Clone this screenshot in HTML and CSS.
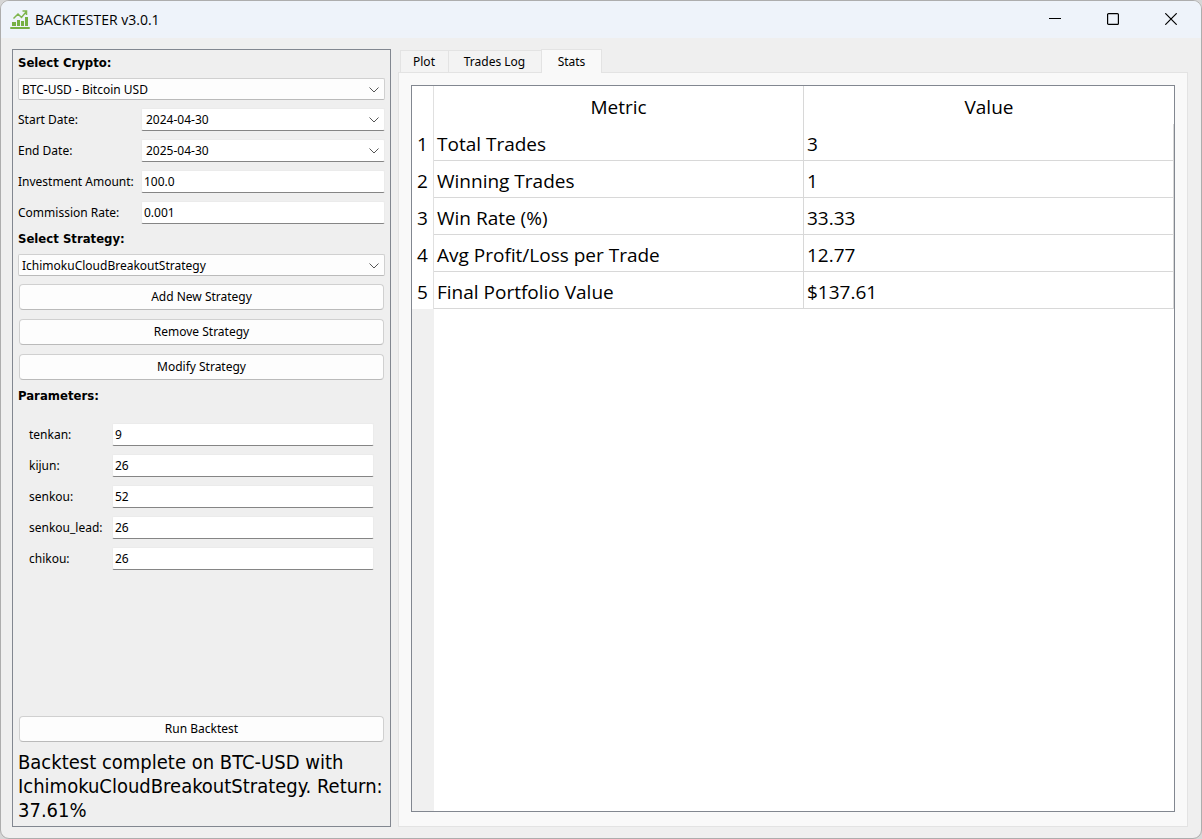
FILE: index.html
```html
<!DOCTYPE html>
<html lang="en">
<head>
<meta charset="utf-8">
<title>BACKTESTER v3.0.1</title>
<link rel="stylesheet" href="styles.css">
</head>
<body>
<div class="window">
  <header class="titlebar">
    <svg class="app-icon" width="20" height="20" viewBox="0 0 20 20" aria-hidden="true">
      <g fill="#76b043">
        <rect x="2" y="12" width="4" height="4"/>
        <rect x="7" y="10" width="3" height="6"/>
        <rect x="11" y="11" width="3" height="5"/>
        <rect x="15" y="7" width="3" height="9"/>
        <rect x="0" y="17" width="20" height="2" rx="1"/>
      </g>
      <path d="M3.500 8.500 8 4l3.500 3.500L16 2M12.500 1h4v4" fill="none" stroke="#7fb54e" stroke-width="1.500"/>
    </svg>
    <h1 class="title">BACKTESTER v3.0.1</h1>
    <div class="window-controls">
      <button class="window-button" type="button" aria-label="Minimize"><svg width="12" height="12" viewBox="0 0 12 12"><path d="M0 5.500h12"/></svg></button>
      <button class="window-button" type="button" aria-label="Maximize"><svg width="12" height="12" viewBox="0 0 12 12"><rect x=".6" y=".6" width="10.800" height="10.800" rx="1"/></svg></button>
      <button class="window-button" type="button" aria-label="Close"><svg width="12" height="12" viewBox="0 0 12 12"><path d="m.3.3 11.400 11.400M11.700.3.3 11.700"/></svg></button>
    </div>
  </header>
  <main class="content">
    <form class="sidebar">
      <label class="heading" for="crypto">Select Crypto:</label>
      <div class="picker combo"><select id="crypto"><option>BTC-USD - Bitcoin USD</option></select><svg class="chevron" width="10" height="6" viewBox="0 0 10 6"><path d="m.5.500 4.500 4.500L9.500.500"/></svg></div>
      <div class="fields">
        <label for="start">Start Date:</label>
        <div class="picker date"><select id="start"><option>2024-04-30</option></select><svg class="chevron" width="10" height="6" viewBox="0 0 10 6"><path d="m.5.500 4.500 4.500L9.500.500"/></svg></div>
        <label for="end">End Date:</label>
        <div class="picker date"><select id="end"><option>2025-04-30</option></select><svg class="chevron" width="10" height="6" viewBox="0 0 10 6"><path d="m.5.500 4.500 4.500L9.500.500"/></svg></div>
        <label for="amount">Investment Amount:</label>
        <input class="text-field" id="amount" type="text" value="100.0">
        <label for="commission">Commission Rate:</label>
        <input class="text-field" id="commission" type="text" value="0.001">
      </div>
      <label class="heading" for="strategy">Select Strategy:</label>
      <div class="picker combo"><select id="strategy"><option>IchimokuCloudBreakoutStrategy</option></select><svg class="chevron" width="10" height="6" viewBox="0 0 10 6"><path d="m.5.500 4.500 4.500L9.500.500"/></svg></div>
      <div class="actions">
        <button class="push-button" type="button">Add New Strategy</button>
        <button class="push-button" type="button">Remove Strategy</button>
        <button class="push-button" type="button">Modify Strategy</button>
        <h2 class="heading">Parameters:</h2>
      </div>
      <div class="fields parameters">
        <label for="tenkan">tenkan:</label>
        <input class="text-field" id="tenkan" type="text" value="9">
        <label for="kijun">kijun:</label>
        <input class="text-field" id="kijun" type="text" value="26">
        <label for="senkou">senkou:</label>
        <input class="text-field" id="senkou" type="text" value="52">
        <label for="senkou-lead">senkou_lead:</label>
        <input class="text-field" id="senkou-lead" type="text" value="26">
        <label for="chikou">chikou:</label>
        <input class="text-field" id="chikou" type="text" value="26">
      </div>
      <div class="run">
        <button class="push-button" type="button">Run Backtest</button>
      </div>
      <p class="status">Backtest complete on BTC-USD with IchimokuCloudBreakoutStrategy. Return: 37.61%</p>
    </form>
    <section class="results">
      <div class="tabs" role="tablist">
        <button class="tab tab-plot" type="button" role="tab">Plot</button>
        <button class="tab tab-log" type="button" role="tab">Trades Log</button>
        <button class="tab tab-stats selected" type="button" role="tab" aria-selected="true">Stats</button>
      </div>
      <div class="tab-panel" role="tabpanel">
        <div class="table-view">
          <table class="stats">
            <colgroup><col class="index-column"><col><col></colgroup>
            <thead><tr><td></td><th scope="col">Metric</th><th scope="col">Value</th></tr></thead>
            <tbody>
              <tr><th scope="row">1</th><td>Total Trades</td><td>3</td></tr>
              <tr><th scope="row">2</th><td>Winning Trades</td><td>1</td></tr>
              <tr><th scope="row">3</th><td>Win Rate (%)</td><td>33.33</td></tr>
              <tr><th scope="row">4</th><td>Avg Profit/Loss per Trade</td><td>12.77</td></tr>
              <tr><th scope="row">5</th><td>Final Portfolio Value</td><td>$137.61</td></tr>
            </tbody>
          </table>
        </div>
      </div>
    </section>
  </main>
</div>
</body>
</html>
```
FILE: styles.css
```css
* { box-sizing: border-box; }

body {
  margin: 0;
  background: #d6d6d6;
  color: #000;
  font: 12px/14px "Noto Sans", sans-serif;
}

button, input, select { font: inherit; color: inherit; }

.window {
  display: flex;
  flex-direction: column;
  min-height: 100vh;
  border: 1px solid #adadad;
  border-radius: 9px;
  background: #efefef;
  overflow: hidden;
}

.titlebar {
  display: flex;
  align-items: center;
  height: 37px;
  padding: 0 1px 0 9px;
  background: #eef3fa;
}

.title {
  flex: 1;
  margin: 0 0 0 5px;
  font: 14px/20px "Open Sans", sans-serif;
}

.window-controls { display: flex; height: 35px; align-self: flex-start; }

.window-button {
  display: grid;
  place-items: center;
  width: 58px;
  padding: 0;
  border: 0;
  background: none;
}

.window-button svg { fill: none; stroke: #000; stroke-width: 1.2; }

.content {
  flex: 1;
  display: flex;
  gap: 7px;
  padding: 11px 13px 11px 11px;
}

.sidebar {
  display: flex;
  flex-direction: column;
  gap: 8px;
  width: 379px;
  padding: 6px 5px 4px;
  border: 1px solid #828790;
}

.heading {
  margin: 0;
  font: bold 13px/14px "DejaVu Sans Condensed", "DejaVu Sans", sans-serif;
}

.picker { position: relative; background: #fdfdfd; }

.picker select {
  display: block;
  width: 100%;
  height: 100%;
  padding: 1px 20px 0 3px;
  border: 0;
  appearance: none;
  background: none;
}

.combo { height: 22px; border: 1px solid #d0d0d0; border-bottom-color: #bababa; border-radius: 2px; }

.date, .text-field {
  height: 23px;
  border: 1px solid #ebebeb;
  border-bottom-color: #858585;
  border-radius: 2px;
  background: #fff;
}

.date select { padding: 0 20px 0 4px; }

.text-field { width: 100%; min-width: 0; padding: 0 2px; }

.chevron {
  position: absolute;
  right: 5px;
  top: 8px;
  fill: none;
  stroke: #555;
  pointer-events: none;
}

.fields {
  display: grid;
  grid-template-columns: 115px 1fr;
  gap: 8px;
  align-items: center;
  white-space: nowrap;
}

.actions { display: grid; gap: 9px; }

.push-button {
  width: calc(100% - 2px);
  height: 26px;
  margin: 0 1px;
  padding: 0;
  border: 1px solid #d0d0d0;
  border-bottom-color: #bababa;
  border-radius: 4px;
  background: #fdfdfd;
}

.parameters {
  grid-template-columns: 75px 1fr;
  padding: 12px 11px 0;
}

.run { margin-top: auto; }

.status {
  margin: 0;
  font: 20px/24px "DejaVu Sans Condensed", "DejaVu Sans", sans-serif;
}

.results { flex: 1; display: flex; flex-direction: column; min-width: 0; }

.tabs { display: flex; align-items: flex-end; padding-left: 2px; }

.tab {
  height: 22px;
  margin: 0;
  padding: 1px 1px 0 0;
  border: 1px solid #e3e3e3;
  border-right: 0;
  border-bottom: 0;
  background: #f3f3f3;
}

.tab-plot { width: 48px; }
.tab-log { width: 93px; }
.tab-stats { width: 61px; }

.tab.selected {
  position: relative;
  height: 24px;
  margin-bottom: -1px;
  padding: 0;
  border-right: 1px solid #e3e3e3;
  background: #f9f9f9;
}

.tab-panel {
  flex: 1;
  display: flex;
  padding: 12px;
  padding-bottom: 14px;
  border: 1px solid #e3e3e3;
  background: #f9f9f9;
}

.table-view {
  flex: 1;
  border: 1px solid #828790;
  background: linear-gradient(90deg, #f0f0f0 22px, #fff 22px);
}

.stats {
  width: 100%;
  border-spacing: 0;
  table-layout: fixed;
  background: #fff;
  font: 19px/26px "Open Sans", sans-serif;
}

.index-column { width: 22px; }

.stats th, .stats td { height: 37px; padding: 3px 3px 0; text-align: left; font-weight: normal; }
.stats thead th { height: 38px; text-align: center; }
.stats tbody td { border-bottom: 1px solid #d8d8d8; }
.stats tr > :first-child { padding: 3px 0 0; border-right: 1px solid #e0e0e0; text-align: center; }
.stats tr > :nth-child(2), .stats tbody tr > :nth-child(3) { border-right: 1px solid #d8d8d8; }
```
